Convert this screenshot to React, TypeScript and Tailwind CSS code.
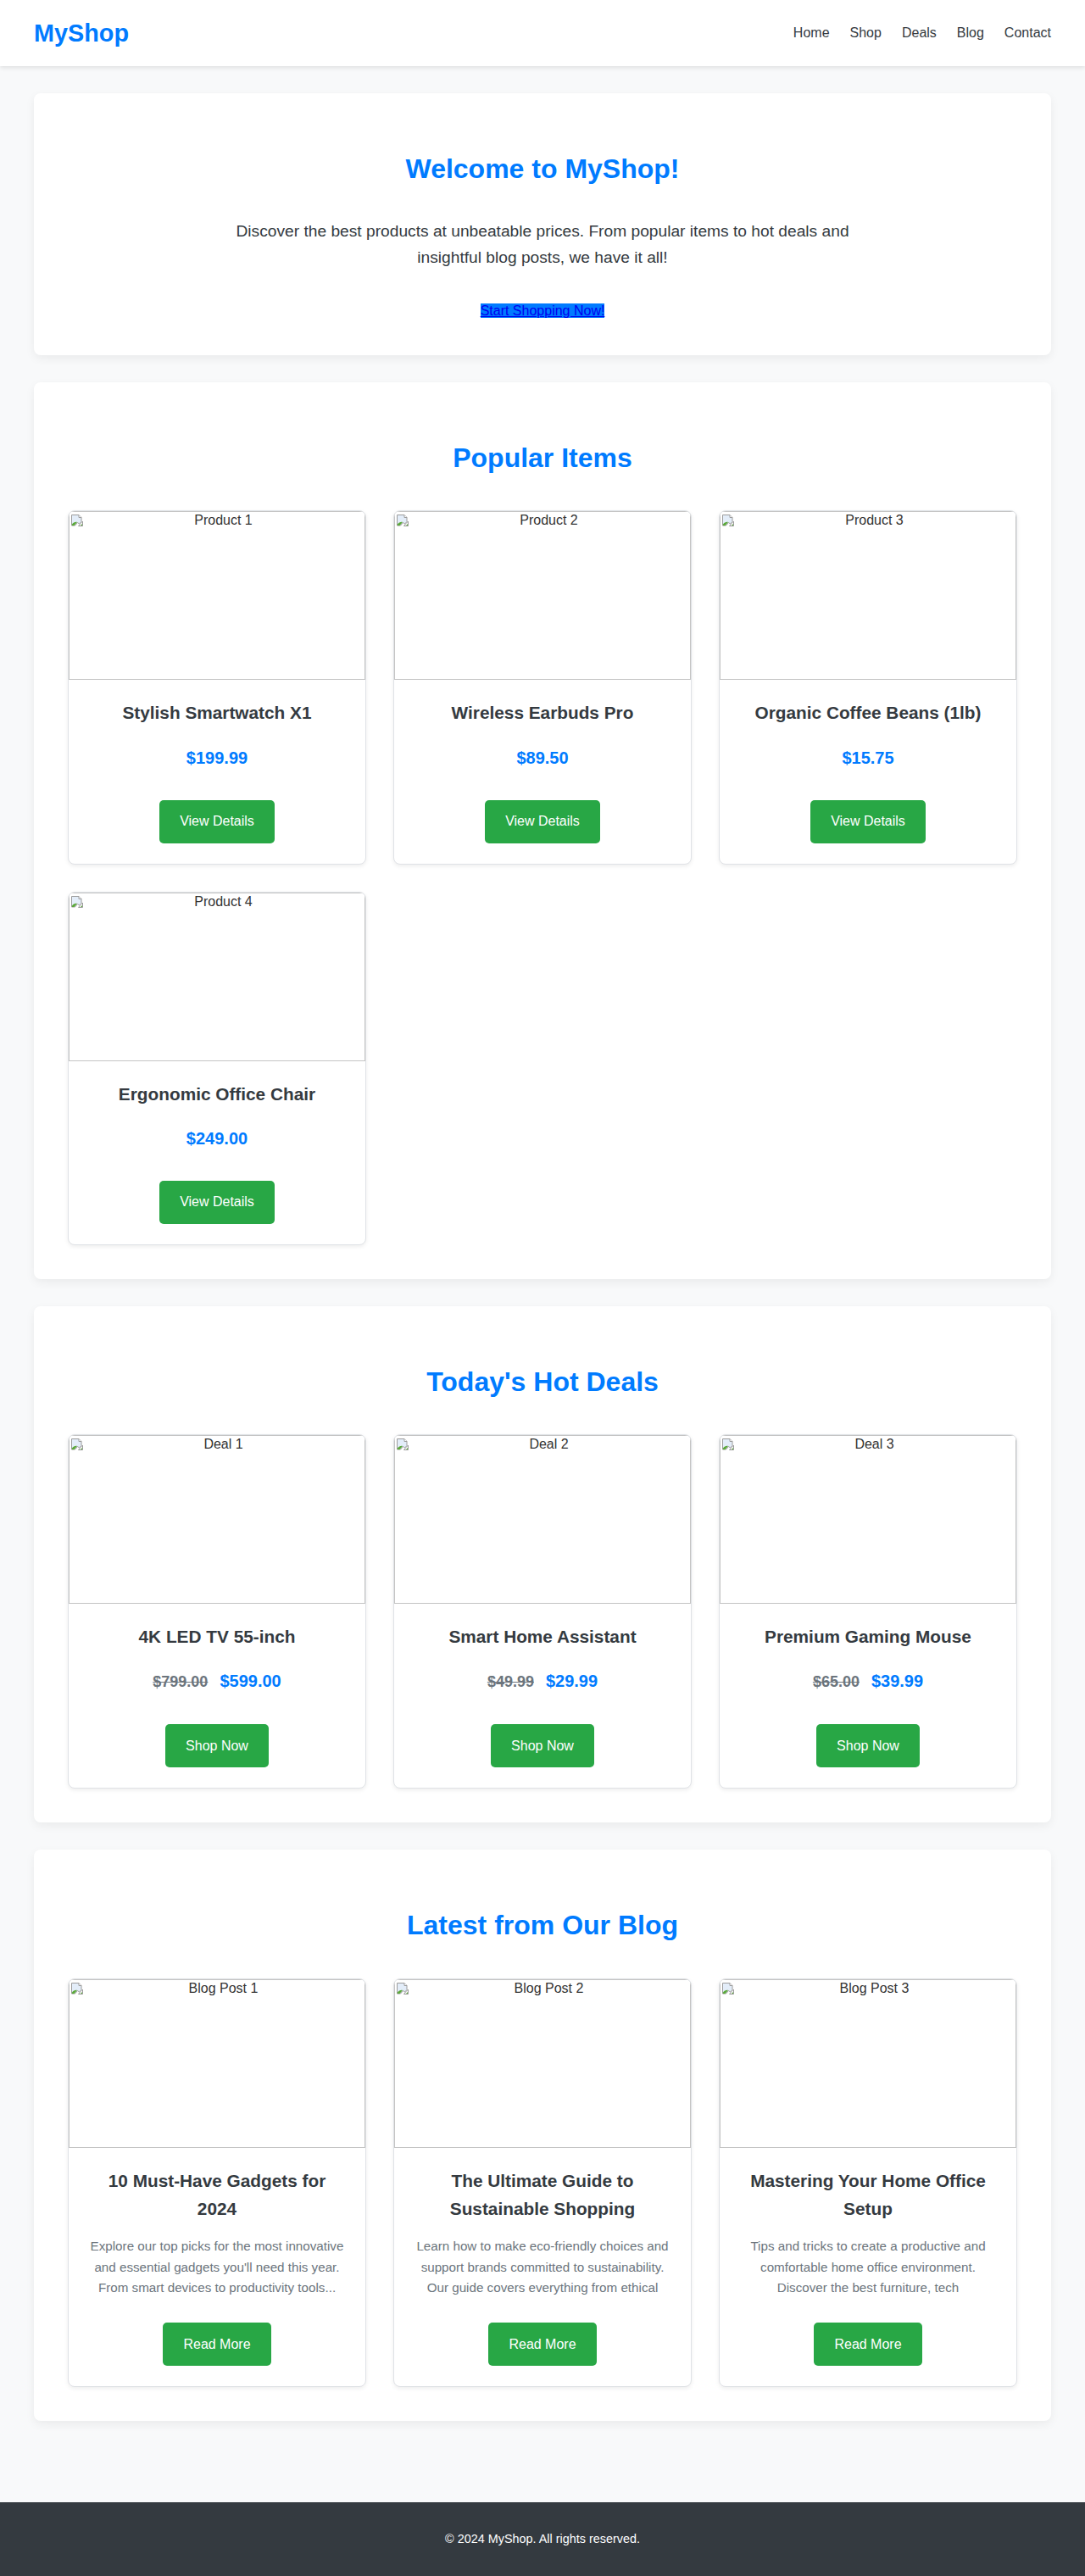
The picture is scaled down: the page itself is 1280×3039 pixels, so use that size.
import React from 'react';

const products = [
  { name: 'Stylish Smartwatch X1', price: '$199.99', alt: 'Product 1' },
  { name: 'Wireless Earbuds Pro', price: '$89.50', alt: 'Product 2' },
  { name: 'Organic Coffee Beans (1lb)', price: '$15.75', alt: 'Product 3' },
  { name: 'Ergonomic Office Chair', price: '$249.00', alt: 'Product 4' },
];

const deals = [
  { name: '4K LED TV 55-inch', old: '$799.00', price: '$599.00', alt: 'Deal 1' },
  { name: 'Smart Home Assistant', old: '$49.99', price: '$29.99', alt: 'Deal 2' },
  { name: 'Premium Gaming Mouse', old: '$65.00', price: '$39.99', alt: 'Deal 3' },
];

const posts = [
  {
    title: '10 Must-Have Gadgets for 2024',
    alt: 'Blog Post 1',
    text: "Explore our top picks for the most innovative and essential gadgets you'll need this year. From smart devices to productivity tools...",
  },
  {
    title: 'The Ultimate Guide to Sustainable Shopping',
    alt: 'Blog Post 2',
    text: 'Learn how to make eco-friendly choices and support brands committed to sustainability. Our guide covers everything from ethical',
  },
  {
    title: 'Mastering Your Home Office Setup',
    alt: 'Blog Post 3',
    text: 'Tips and tricks to create a productive and comfortable home office environment. Discover the best furniture, tech',
  },
];

function BrokenIcon() {
  return (
    <svg width="16" height="16" viewBox="0 0 16 16" className="shrink-0">
      <path d="M1.5 1.5h8.5l3 3v5l-2.5 2.5-2-1.5-3 3.5H1.5z" fill="#e3edf9" stroke="#9c9c9c" />
      <path d="M10 1.5v3h3" fill="#fff" stroke="#9c9c9c" />
      <path d="M2 12.5c1.5-2 3.5-3 6-2.5l-3.5 4H2z" fill="#5ba83a" />
      <path d="M9.5 14.5l2.5-3 2.5-2.5v5.5z" fill="#fff" stroke="#9c9c9c" />
      <path d="M12 14l2-2v2z" fill="#5ba83a" />
    </svg>
  );
}

function BrokenImage({ alt }: { alt: string }) {
  return (
    <div className="h-[199px] border border-[#c4c4c4] flex items-start">
      <div className="ml-[1px] mt-[2px]">
        <BrokenIcon />
      </div>
      <span className="flex-1 text-center text-base leading-[20px] text-[#333] pr-[2px]">{alt}</span>
    </div>
  );
}

function Card({ alt, children }: { alt: string; children: React.ReactNode }) {
  return (
    <div className="bg-white border border-[#dfe2e6] rounded-lg overflow-hidden shadow-[0_2px_5px_rgba(0,0,0,0.07)] flex flex-col">
      <BrokenImage alt={alt} />
      <div className="px-6 pt-[22px] pb-6 flex flex-col items-center text-center">{children}</div>
    </div>
  );
}

function GreenButton({ label, className }: { label: string; className: string }) {
  return (
    <a href="#" className={`h-[51px] px-6 rounded-[5px] bg-[#28a745] text-white text-base flex items-center ${className}`}>
      {label}
    </a>
  );
}

function Section({ title, children }: { title: string; children: React.ReactNode }) {
  return (
    <section className="bg-white rounded-lg shadow-[0_4px_12px_rgba(0,0,0,0.06)] p-10">
      <h2 className="mt-6 mb-[36px] text-center text-[32px] leading-[51.2px] font-bold text-[#007bff]">{title}</h2>
      {children}
    </section>
  );
}

export default function App() {
  return (
    <div className="min-h-screen bg-[#f8f9fa] text-[#343a40] [font-family:'Liberation_Sans',Arial,sans-serif]">
      <header className="bg-white shadow-[0_2px_5px_rgba(0,0,0,0.1)] px-10 py-4 flex items-center justify-between">
        <a href="#" className="text-[28.8px] leading-[46px] font-bold text-[#007bff]">MyShop</a>
        <nav className="flex gap-6 text-base text-[#343a40]">
          <a href="#">Home</a>
          <a href="#">Shop</a>
          <a href="#">Deals</a>
          <a href="#">Blog</a>
          <a href="#">Contact</a>
        </nav>
      </header>

      <main className="px-10 pt-8 pb-24 flex flex-col gap-8">
        <section className="bg-white rounded-lg shadow-[0_4px_12px_rgba(0,0,0,0.06)] p-10 text-center">
          <h1 className="mt-6 text-[32px] leading-[51.2px] font-bold text-[#007bff]">Welcome to MyShop!</h1>
          <p className="mt-[33px] max-w-[800px] mx-auto text-[19.2px] leading-[30.7px] text-[#343a40]">
            Discover the best products at unbeatable prices. From popular items to hot deals and insightful blog posts, we have it all!
          </p>
          <div className="mt-[34px] leading-[25.6px]">
            <a href="#" className="bg-[#007bff] text-[#0000ee] underline text-base">Start Shopping Now!</a>
          </div>
        </section>

        <Section title="Popular Items">
          <div className="grid grid-cols-3 gap-8">
            {products.map((p) => (
              <Card key={p.name} alt={p.alt}>
                <h3 className="text-[20.8px] leading-[33.28px] font-bold text-[#343a40]">{p.name}</h3>
                <p className="mt-5 text-[20px] leading-8 font-bold text-[#007bff]">{p.price}</p>
                <GreenButton label="View Details" className="mt-[34px]" />
              </Card>
            ))}
          </div>
        </Section>

        <Section title="Today's Hot Deals">
          <div className="grid grid-cols-3 gap-8">
            {deals.map((d) => (
              <Card key={d.name} alt={d.alt}>
                <h3 className="text-[20.8px] leading-[33.28px] font-bold text-[#343a40]">{d.name}</h3>
                <p className="mt-5 text-[20px] leading-8 font-bold text-[#007bff]">
                  <span className="mr-[14px] text-[18px] text-[#6c757d] line-through">{d.old}</span>
                  <span>{d.price}</span>
                </p>
                <GreenButton label="Shop Now" className="mt-[34px]" />
              </Card>
            ))}
          </div>
        </Section>

        <Section title="Latest from Our Blog">
          <div className="grid grid-cols-3 gap-8">
            {posts.map((b) => (
              <Card key={b.title} alt={b.alt}>
                <h3 className="text-[20.8px] leading-[33.28px] font-bold text-[#343a40]">{b.title}</h3>
                <p className="mt-4 text-[15.2px] leading-[24.32px] text-[#6c757d]">{b.text}</p>
                <GreenButton label="Read More" className="mt-[29px]" />
              </Card>
            ))}
          </div>
        </Section>
      </main>

      <footer className="bg-[#343a40] text-white text-center py-8 text-[14.4px] leading-[23px]">
        © 2024 MyShop. All rights reserved.
      </footer>
    </div>
  );
}
